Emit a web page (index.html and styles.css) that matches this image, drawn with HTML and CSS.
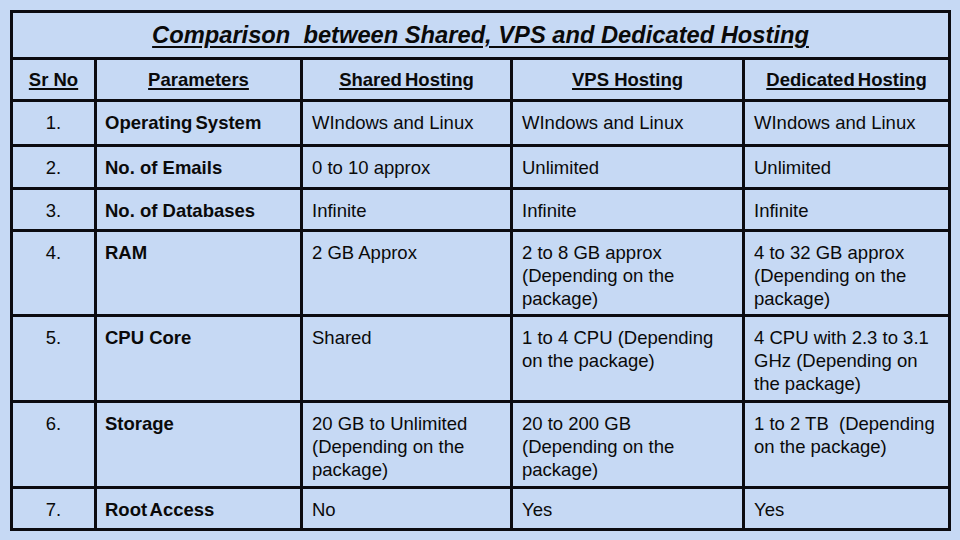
FILE: index.html
```html
<!DOCTYPE html>
<html>
<head>
<meta charset="utf-8">
<link rel="stylesheet" href="styles.css">
</head>
<body>
<table class="grid">
  <colgroup>
    <col class="c-sr">
    <col class="c-param">
    <col class="c-shared">
    <col class="c-vps">
    <col class="c-ded">
  </colgroup>
  <tr class="r-title">
    <td colspan="5" class="title">Comparison&nbsp; between Shared, VPS and Dedicated Hosting</td>
  </tr>
  <tr class="r-head">
    <th><span class="u">Sr No</span></th>
    <th><span class="u">Parameters</span></th>
    <th><span class="u tight">Shared Hosting</span></th>
    <th><span class="u">VPS Hosting</span></th>
    <th><span class="u tight">Dedicated Hosting</span></th>
  </tr>
  <tr class="r-1">
    <td class="num">1.</td>
    <td class="param tight">Operating System</td>
    <td>WIndows and Linux</td>
    <td>WIndows and Linux</td>
    <td>WIndows and Linux</td>
  </tr>
  <tr class="r-2">
    <td class="num">2.</td>
    <td class="param">No. of Emails</td>
    <td>0 to 10 approx</td>
    <td>Unlimited</td>
    <td>Unlimited</td>
  </tr>
  <tr class="r-3">
    <td class="num">3.</td>
    <td class="param">No. of Databases</td>
    <td>Infinite</td>
    <td>Infinite</td>
    <td>Infinite</td>
  </tr>
  <tr class="r-4">
    <td class="num">4.</td>
    <td class="param">RAM</td>
    <td>2 GB Approx</td>
    <td>2 to 8 GB approx (Depending on the package)</td>
    <td>4 to 32 GB approx (Depending on the package)</td>
  </tr>
  <tr class="r-5">
    <td class="num">5.</td>
    <td class="param">CPU Core</td>
    <td>Shared</td>
    <td>1 to 4 CPU (Depending on the package)</td>
    <td>4 CPU with 2.3 to 3.1 GHz (Depending on the package)</td>
  </tr>
  <tr class="r-6">
    <td class="num">6.</td>
    <td class="param">Storage</td>
    <td>20 GB to Unlimited (Depending on the package)</td>
    <td>20 to 200 GB<br>(Depending on the package)</td>
    <td>1 to 2 TB&nbsp; (Depending on the package)</td>
  </tr>
  <tr class="r-7">
    <td class="num">7.</td>
    <td class="param tight">Root Access</td>
    <td>No</td>
    <td>Yes</td>
    <td>Yes</td>
  </tr>
</table>
</body>
</html>
```

FILE: styles.css
```css
html, body {
  margin: 0;
  padding: 0;
  background: #c6d9f4;
}
body {
  padding: 10px 0 0 10px;
  font-family: "Liberation Sans", Arial, sans-serif;
  color: #0a0a0a;
}
.grid {
  border-collapse: collapse;
  table-layout: fixed;
  width: 941px;
  background: #c6d9f4;
}
.c-sr { width: 84px; }
.c-param { width: 206px; }
.c-shared { width: 210px; }
.c-vps { width: 232px; }
.c-ded { width: 206px; }

.grid td, .grid th {
  border: 3px solid #0b0b10;
  font-size: 18.5px;
  line-height: 23px;
  padding: 9px 8px 0 9px;
  vertical-align: top;
  text-align: left;
  font-weight: normal;
}
.grid .param { padding-left: 8px; }
.grid .title {
  font-size: 23.7px;
  font-weight: bold;
  font-style: italic;
  text-decoration: underline;
  text-decoration-thickness: 2px;
  text-underline-offset: 3px;
  text-align: center;
  vertical-align: middle;
  padding: 0;
  line-height: 28px;
}
.grid th {
  font-weight: bold;
  text-align: center;
  vertical-align: middle;
  padding: 0;
}
.u {
  text-decoration: underline;
  text-decoration-thickness: 2px;
  text-underline-offset: 2px;
}
.tight { word-spacing: -2px; }
.grid .num { text-align: center; padding-left: 0; padding-right: 0; }
.grid .param { font-weight: bold; }

.r-title { height: 47px; }
.r-head { height: 42px; }
.r-1 { height: 45px; }
.r-2 { height: 43px; }
.r-3 { height: 42px; }
.r-4 { height: 85px; }
.r-5 { height: 86px; }
.r-6 { height: 86px; }
.r-7 { height: 42px; }
```
